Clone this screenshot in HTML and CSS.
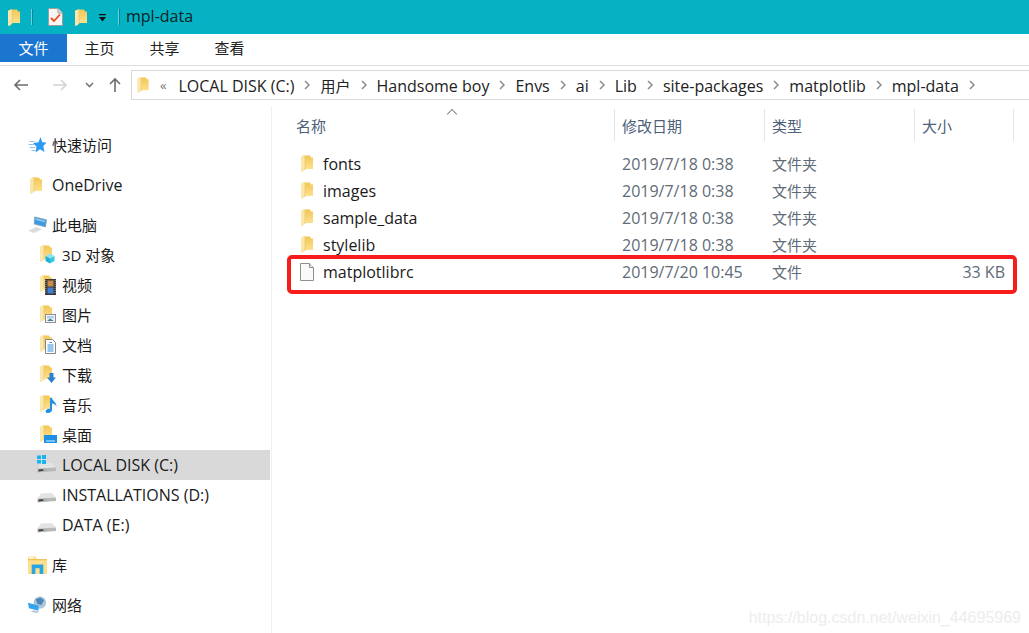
FILE: index.html
```html
<!DOCTYPE html>
<html lang="zh-CN">
<head>
    <meta charset="UTF-8">
    <meta name="viewport" content="width=device-width, initial-scale=1.0">
    <title>mpl-data</title>
    <link rel="stylesheet" href="styles.css">
</head>
<body>
    <!-- Shared icons -->
    <svg class="defs" width="0" height="0">
        <defs>
            <linearGradient id="folderBack" x1="0" y1="0" x2="0" y2="1">
                <stop offset="0" stop-color="#f3c655"/>
                <stop offset="1" stop-color="#fde08e"/>
            </linearGradient>
        </defs>
        <symbol id="folder" viewBox="0 0 12 17">
            <path d="M2 0.5 H9 L10 2.5 H12 V14 H2 Z" fill="url(#folderBack)"/>
            <path d="M0 1.5 L4 0.5 V15 L1 17 L0 16.5 Z" fill="#fbe7a9"/>
            <path d="M4 0.5 V15" stroke="#e8c268" stroke-width="0.6"/>
        </symbol>
        <symbol id="drive" viewBox="0 0 19 10">
            <path d="M4 0.5 L15 0 L19 4.5 L0.5 5.5 Z" fill="#e3e3e3"/>
            <path d="M0.5 5.5 L19 4.5 L19 8 L0.5 9.5 Z" fill="#b8b8b8"/>
            <path d="M1.5 6.5 L6.5 6.2 L6.5 7.8 L1.5 8.4 Z" fill="#3a3a3a"/>
            <path d="M8 7 L9.5 6.9" stroke="#5fc45f"/>
        </symbol>
        <symbol id="chevron" viewBox="0 0 6 10">
            <path d="M1 1 L5 5 L1 9" fill="none" stroke="#8a8a8a" stroke-width="1.5"/>
        </symbol>
    </svg>

    <!-- Title bar -->
    <div class="titlebar">
        <svg class="qa-icon"><use href="#folder"/></svg>
        <span class="qa-sep"></span>
        <svg class="qa-check" viewBox="0 0 15 18">
            <path d="M0.5 0.5 H10 L14.5 5 V17.5 H0.5 Z" fill="#f7f5f3" stroke="#9d9d9d"/>
            <path d="M10 0.5 V5 H14.5" fill="#ddd" stroke="#9d9d9d"/>
            <path d="M3 10 L6 13 L12 6.5" fill="none" stroke="#e8491d" stroke-width="1.8"/>
        </svg>
        <svg class="qa-icon qa-second"><use href="#folder"/></svg>
        <svg class="qa-drop" viewBox="0 0 9 8">
            <path d="M1 0 H8 V1.2 H1 Z M1 3 H8 L4.5 7.5 Z" fill="#111"/>
        </svg>
        <span class="qa-sep qa-sep-last"></span>
        <span class="title-text">mpl-data</span>
    </div>

    <!-- Ribbon tabs -->
    <div class="ribbon">
        <div class="tab tab-file">文件</div>
        <div class="tab">主页</div>
        <div class="tab">共享</div>
        <div class="tab">查看</div>
    </div>

    <!-- Address bar -->
    <div class="navbar">
        <svg class="nav-btn" viewBox="0 0 16 14">
            <path d="M15 7 H2 M7 2 L2 7 L7 12" fill="none" stroke="#6d6d6d" stroke-width="1.6"/>
        </svg>
        <svg class="nav-btn nav-forward" viewBox="0 0 16 14">
            <path d="M1 7 H14 M9 2 L14 7 L9 12" fill="none" stroke="#d4d4d4" stroke-width="1.6"/>
        </svg>
        <svg class="nav-drop" viewBox="0 0 9 6">
            <path d="M1 1 L4.5 4.5 L8 1" fill="none" stroke="#777" stroke-width="1.6"/>
        </svg>
        <svg class="nav-up" viewBox="0 0 14 16">
            <path d="M7 15 V2 M2 7 L7 2 L12 7" fill="none" stroke="#6d6d6d" stroke-width="1.6"/>
        </svg>
        <div class="address">
            <svg class="addr-folder"><use href="#folder"/></svg>
            <span class="addr-more">«</span>
            <span class="crumb">LOCAL DISK (C:)</span><svg class="chev"><use href="#chevron"/></svg>
            <span class="cjk">用户</span><svg class="chev"><use href="#chevron"/></svg>
            <span class="crumb">Handsome boy</span><svg class="chev"><use href="#chevron"/></svg>
            <span class="crumb">Envs</span><svg class="chev"><use href="#chevron"/></svg>
            <span class="crumb">ai</span><svg class="chev"><use href="#chevron"/></svg>
            <span class="crumb">Lib</span><svg class="chev"><use href="#chevron"/></svg>
            <span class="crumb">site-packages</span><svg class="chev"><use href="#chevron"/></svg>
            <span class="crumb">matplotlib</span><svg class="chev"><use href="#chevron"/></svg>
            <span class="crumb">mpl-data</span><svg class="chev"><use href="#chevron"/></svg>
        </div>
    </div>

    <div class="content">
        <!-- Navigation pane -->
        <div class="sidebar">
            <div class="side-group">
                <div class="side-row cjk">
                    <svg class="side-icon" viewBox="0 0 18 18"><path d="M12 1 L13.8 6.2 L18 6.6 L14.8 10 L16 16 L11.5 13.2 L7 16.5 L8 10.8 L4.5 7 L10 6.2 Z" fill="#2b9af3"/><path d="M1 5.5 H6 M0 8.5 H6 M1 11.5 H7 M3 14.5 H7" stroke="#8cc4ee" stroke-width="1"/></svg>
                    <span>快速访问</span>
                </div>
            </div>
            <div class="side-group">
                <div class="side-row">
                    <svg class="side-icon side-folder"><use href="#folder"/></svg>
                    <span>OneDrive</span>
                </div>
            </div>
            <div class="side-group">
                <div class="side-row cjk">
                    <svg class="side-icon" viewBox="0 0 20 18"><path d="M7 0.5 L19.5 3.5 L18.5 11 L6.5 8 Z" fill="#3d9be0" stroke="#8a98a4" stroke-width="0.7"/><path d="M8 2 L18 4.5 L17.8 6 L8 3.5 Z" fill="#8fd0f5"/><path d="M0 15 L9 11 L15 13.5 L6 17.5 Z" fill="#dcdcdc"/></svg>
                    <span>此电脑</span>
                </div>
                <div class="side-row sub cjk">
                    <span class="stack"><svg class="sub-folder"><use href="#folder"/></svg><svg class="badge badge-3d" viewBox="0 0 10 11"><path d="M5 0.5 L9.5 3 L5 5.5 L0.5 3 Z" fill="#8fe3f2"/><path d="M0.5 3 L5 5.5 V10.5 L0.5 8 Z" fill="#1fb0d8"/><path d="M9.5 3 L5 5.5 V10.5 L9.5 8 Z" fill="#3cc5e3"/></svg></span>
                    <span>3D 对象</span>
                </div>
                <div class="side-row sub cjk">
                    <span class="stack"><svg class="sub-folder"><use href="#folder"/></svg><svg class="badge badge-film" viewBox="0 0 11 16"><rect width="11" height="16" fill="#3a3a3a"/><path d="M0.8 1 V15 M10.2 1 V15" stroke="#bbb" stroke-width="0.8" stroke-dasharray="1 1"/><rect x="2.5" y="1.5" width="6" height="6" fill="#c98a4a"/><rect x="2.5" y="8.5" width="6" height="6" fill="#3f7fd0"/></svg></span>
                    <span>视频</span>
                </div>
                <div class="side-row sub cjk">
                    <span class="stack"><svg class="sub-folder"><use href="#folder"/></svg><svg class="badge badge-pic" viewBox="0 0 11 9"><rect x="0.5" y="0.5" width="10" height="8" fill="#f4f4f4" stroke="#8f8f8f"/><rect x="2" y="2" width="7" height="2.5" fill="#a9d3ee"/><path d="M2 7 L5 4.5 L9 7 Z" fill="#4d7f95"/></svg></span>
                    <span>图片</span>
                </div>
                <div class="side-row sub cjk">
                    <span class="stack"><svg class="sub-folder"><use href="#folder"/></svg><svg class="badge badge-doc" viewBox="0 0 11 15"><path d="M0.5 0.5 H7.5 L10.5 3.5 V14.5 H0.5 Z" fill="#fff" stroke="#858585"/><path d="M2.5 6 H8.5 M2.5 8 H8.5 M2.5 10 H8.5 M2.5 12 H8.5 M4.5 3.5 H7" stroke="#2f8fd8"/></svg></span>
                    <span>文档</span>
                </div>
                <div class="side-row sub cjk">
                    <span class="stack"><svg class="sub-folder"><use href="#folder"/></svg><svg class="badge badge-down" viewBox="0 0 9 10"><path d="M2.5 0 H6.5 V4.5 H9 L4.5 10 L0 4.5 H2.5 Z" fill="#2f7fd0"/></svg></span>
                    <span>下载</span>
                </div>
                <div class="side-row sub cjk">
                    <span class="stack"><svg class="sub-folder"><use href="#folder"/></svg><svg class="badge badge-music" viewBox="0 0 12 15"><path d="M5 0 H7 C7.3 3 11.5 4 11.5 8.5 C10.5 6.5 8.8 5.8 7 5.6 V12 C7 14 4.8 15 2.8 15 C0.4 15 0 12.5 1.8 11.4 C2.8 10.8 4 10.7 5 11 Z" fill="#1e8fe6"/></svg></span>
                    <span>音乐</span>
                </div>
                <div class="side-row sub cjk">
                    <span class="stack"><svg class="sub-folder"><use href="#folder"/></svg><svg class="badge badge-desk" viewBox="0 0 13 8"><rect width="13" height="8" fill="#1e8fe6"/><rect x="2" y="5.5" width="9" height="1" fill="#dff1ff"/></svg></span>
                    <span>桌面</span>
                </div>
                <div class="side-row sub selected">
                    <span class="stack"><svg class="sub-drive"><use href="#drive"/></svg><svg class="win" viewBox="0 0 9 9"><path d="M0 0.6 H4 V4 H0 Z M5 0 H9 V4 H5 Z M0 5 H4 V8.4 H0 Z M5 5 H9 V9 H5 Z" fill="#18b4f2"/></svg></span>
                    <span>LOCAL DISK (C:)</span>
                </div>
                <div class="side-row sub">
                    <span class="stack"><svg class="sub-drive"><use href="#drive"/></svg></span>
                    <span>INSTALLATIONS (D:)</span>
                </div>
                <div class="side-row sub">
                    <span class="stack"><svg class="sub-drive"><use href="#drive"/></svg></span>
                    <span>DATA (E:)</span>
                </div>
            </div>
            <div class="side-group">
                <div class="side-row cjk">
                    <svg class="side-icon" viewBox="0 0 18 17"><path d="M0 0.5 H7 L8.5 3 H18 V17 H0 Z" fill="#fde08c"/><path d="M0 3.5 H18" stroke="#e9bb4c"/><path d="M1 1.2 H5 V2.4 H1 Z" fill="#fff"/><path d="M3.5 17 V8 H14.5 V17 H11 V11.5 H7 V17 Z" fill="#2aa4e6"/></svg>
                    <span>库</span>
                </div>
            </div>
            <div class="side-group">
                <div class="side-row cjk">
                    <svg class="side-icon" viewBox="0 0 20 18"><circle cx="12.5" cy="6.5" r="6.5" fill="#a9c6dc"/><path d="M8 3 L13 1 L17 4 L14 9 L10 8 Z" fill="#4f88b8"/><path d="M0 6.5 L11 9.5 V15 L1 12.5 Z" fill="#33a5ee"/><path d="M3 16 L9 17.5 L12 16 L6 14.5 Z" fill="#b9c6d0"/></svg>
                    <span>网络</span>
                </div>
            </div>
        </div>

        <!-- File list -->
        <div class="files">
            <div class="sort-caret"></div>
            <div class="file-row file-header cjk">
                <div class="col-name">名称</div>
                <div class="col-date">修改日期</div>
                <div class="col-type">类型</div>
                <div class="col-size">大小</div>
            </div>
            <div class="file-list">
                <div class="file-row">
                    <div class="col-name"><svg class="file-icon"><use href="#folder"/></svg><span class="fname">fonts</span></div>
                    <div class="col-date">2019/7/18 0:38</div>
                    <div class="col-type cjk">文件夹</div>
                    <div class="col-size"></div>
                </div>
                <div class="file-row">
                    <div class="col-name"><svg class="file-icon"><use href="#folder"/></svg><span class="fname">images</span></div>
                    <div class="col-date">2019/7/18 0:38</div>
                    <div class="col-type cjk">文件夹</div>
                    <div class="col-size"></div>
                </div>
                <div class="file-row">
                    <div class="col-name"><svg class="file-icon"><use href="#folder"/></svg><span class="fname">sample_data</span></div>
                    <div class="col-date">2019/7/18 0:38</div>
                    <div class="col-type cjk">文件夹</div>
                    <div class="col-size"></div>
                </div>
                <div class="file-row">
                    <div class="col-name"><svg class="file-icon"><use href="#folder"/></svg><span class="fname">stylelib</span></div>
                    <div class="col-date">2019/7/18 0:38</div>
                    <div class="col-type cjk">文件夹</div>
                    <div class="col-size"></div>
                </div>
                <div class="file-row">
                    <div class="col-name"><svg class="file-icon doc-icon" viewBox="0 0 14 18"><path d="M0.5 0.5 H9.5 L13.5 4.5 V17.5 H0.5 Z" fill="#fafafa" stroke="#8f8f8f"/><path d="M9.5 0.5 V4.5 H13.5" fill="#e6e6e6" stroke="#8f8f8f"/></svg><span class="fname">matplotlibrc</span></div>
                    <div class="col-date">2019/7/20 10:45</div>
                    <div class="col-type cjk">文件</div>
                    <div class="col-size num">33 KB</div>
                </div>
                <!-- red highlight drawn over the last row -->
                <div class="highlight"></div>
            </div>
        </div>
    </div>

    <div class="watermark">https://blog.csdn.net/weixin_44695969</div>
</body>
</html>
```

FILE: styles.css
```css
html, body {
    height: 100%;
}

body {
    margin: 0;
    font-family: "Open Sans", "Noto Sans CJK SC", sans-serif;
    font-size: 16px;
    color: #1a1a1a;
    background-color: #fff;
    overflow: hidden;
    position: relative;
}

/* Chinese labels run a little smaller than the latin text */
.cjk {
    font-size: 15px;
}

.defs {
    position: absolute;
}

/* Title bar */
.titlebar {
    display: flex;
    align-items: center;
    height: 34px;
    padding-left: 8px;
    background-color: #04b2c3;
}

.qa-icon {
    width: 12px;
    height: 17px;
}

.qa-sep {
    width: 1px;
    height: 16px;
    margin-left: 11px;
    background-color: #6fd0da;
    border-right: 1px solid #028a98;
}

.qa-check {
    width: 15px;
    height: 18px;
    margin-left: 15px;
}

.qa-second {
    margin-left: 12px;
}

.qa-drop {
    width: 9px;
    height: 8px;
    margin-left: 11px;
    margin-top: 2px;
}

.qa-sep-last {
    margin-left: 11px;
}

.title-text {
    margin-left: 6px;
    margin-top: -3px;
    color: #0b2226;
}

/* Ribbon */
.ribbon {
    display: flex;
    height: 28px;
    padding-bottom: 3px;
    border-bottom: 1px solid #dcdcdc;
}

.tab {
    width: 65px;
    line-height: 29px;
    text-align: center;
    font-size: 15px;
    color: #222;
}

.tab-file {
    width: 67px;
    background-color: #1a76cf;
    color: #fff;
}

/* Address bar */
.navbar {
    display: flex;
    align-items: center;
    height: 40px;
    padding-left: 13px;
    padding-bottom: 2px;
    box-sizing: border-box;
}

.nav-btn {
    width: 16px;
    height: 14px;
}

.nav-forward {
    margin-left: 23px;
}

.nav-drop {
    width: 9px;
    height: 6px;
    margin-left: 17px;
}

.nav-up {
    width: 14px;
    height: 16px;
    margin-left: 14px;
}

.address {
    display: flex;
    align-items: center;
    flex: 1;
    height: 28px;
    margin-left: 9px;
    padding-left: 5px;
    border: 1px solid #d9d9d9;
    border-right: none;
    white-space: nowrap;
    color: #222;
}

.addr-folder {
    width: 12px;
    height: 16px;
}

.addr-more {
    margin-left: 11px;
    margin-right: 12px;
    font-size: 13px;
    color: #777;
}

.crumb {
    margin-top: 2px;
}

.chev {
    width: 6px;
    height: 10px;
    margin: 0 10px;
    flex: none;
}

/* Main area */
.content {
    display: flex;
    height: 527px;
}

/* Navigation pane */
.sidebar {
    width: 270px;
    padding-top: 24px;
    box-sizing: border-box;
    flex: none;
}

.side-group {
    margin-bottom: 10px;
}

.side-row {
    display: flex;
    align-items: center;
    height: 30px;
    padding-left: 28px;
    color: #1a1a1a;
}

.side-row.cjk > span:last-child {
    margin-top: -2px;
}

.side-icon {
    width: 19px;
    height: 18px;
    margin-right: 5px;
    flex: none;
}

.side-folder {
    width: 12px;
    height: 17px;
    margin-left: 2px;
    margin-right: 10px;
}

.sub {
    padding-left: 37px;
}

.selected {
    background-color: #d9d9d9;
}

.stack {
    position: relative;
    width: 25px;
    height: 20px;
    flex: none;
}

.sub-folder {
    position: absolute;
    left: 3px;
    top: 0;
    width: 12px;
    height: 17px;
}

.badge {
    position: absolute;
}

.badge-3d {
    left: 8px;
    top: 8px;
    width: 10px;
    height: 11px;
}

.badge-film {
    left: 8px;
    top: 4px;
    width: 11px;
    height: 16px;
}

.badge-pic {
    left: 8px;
    top: 9px;
    width: 11px;
    height: 9px;
}

.badge-doc {
    left: 8px;
    top: 4px;
    width: 11px;
    height: 15px;
}

.badge-down {
    left: 10px;
    top: 8px;
    width: 9px;
    height: 10px;
}

.badge-music {
    left: 8px;
    top: 3px;
    width: 12px;
    height: 15px;
}

.badge-desk {
    left: 7px;
    top: 10px;
    width: 13px;
    height: 8px;
}

.sub-drive {
    position: absolute;
    left: 0;
    top: 8px;
    width: 19px;
    height: 10px;
}

.win {
    position: absolute;
    left: 0;
    top: 0;
    width: 9px;
    height: 9px;
}

/* File list */
.files {
    position: relative;
    flex: 1;
    padding-left: 2px;
    border-left: 1px solid #f0f0f0;
    margin-left: 1px;
}

.sort-caret {
    position: absolute;
    left: 176px;
    top: 4px;
    width: 7px;
    height: 7px;
    border-left: 1px solid #777;
    border-top: 1px solid #777;
    transform: rotate(45deg) scale(0.9);
}

.file-row {
    display: flex;
    align-items: center;
    height: 27px;
}

.file-header {
    height: 32px;
    margin-top: 3px;
    color: #4c607a;
}

.file-list {
    position: relative;
    margin-top: 9px;
}

.col-name {
    display: flex;
    align-items: center;
    flex: none;
    width: 340px;
    padding-left: 22px;
    box-sizing: border-box;
}

.col-date,
.col-type,
.col-size {
    flex: none;
    box-sizing: border-box;
    padding-left: 8px;
    color: #5f6b76;
}

.col-date {
    width: 150px;
}

.col-type {
    width: 150px;
}

.col-size {
    width: 100px;
}

.file-header .col-date,
.file-header .col-type,
.file-header .col-size {
    height: 32px;
    line-height: 34px;
    padding-left: 7px;
    border-left: 1px solid #e5e5e5;
    color: #4c607a;
}

.file-header .col-size {
    border-right: 1px solid #e5e5e5;
}

.file-icon {
    width: 12px;
    height: 17px;
    margin-left: 5px;
    margin-right: 10px;
    flex: none;
}

.doc-icon {
    width: 14px;
    height: 18px;
    margin-left: 4px;
    margin-right: 9px;
}

.fname {
    color: #1a1a1a;
}

.num {
    text-align: right;
    padding-right: 9px;
}

.highlight {
    position: absolute;
    left: 13px;
    top: 105px;
    width: 722px;
    height: 31px;
    border: 4px solid #f81d1d;
    border-radius: 5px;
}

/* Watermark */
.watermark {
    position: absolute;
    right: 8px;
    bottom: 6px;
    font-family: "Liberation Sans", sans-serif;
    font-size: 16px;
    color: #ededed;
}
```
